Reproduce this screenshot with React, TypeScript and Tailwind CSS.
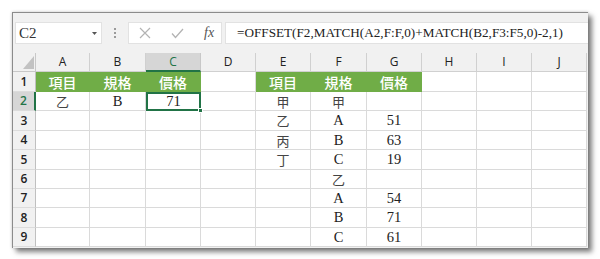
import React from "react";

const letters = ["A", "B", "C", "D", "E", "F", "G", "H", "I", "J"];
const rowH = [20, 19, 20, 19, 20, 19, 19, 20, 19];

type Cell = { t: string; green?: boolean };
const data: Record<number, Record<string, Cell>> = {
  1: {
    A: { t: "項目", green: true },
    B: { t: "規格", green: true },
    C: { t: "價格", green: true },
    E: { t: "項目", green: true },
    F: { t: "規格", green: true },
    G: { t: "價格", green: true },
  },
  2: { A: { t: "乙" }, B: { t: "B" }, C: { t: "71" }, E: { t: "甲" }, F: { t: "甲" } },
  3: { E: { t: "乙" }, F: { t: "A" }, G: { t: "51" } },
  4: { E: { t: "丙" }, F: { t: "B" }, G: { t: "63" } },
  5: { E: { t: "丁" }, F: { t: "C" }, G: { t: "19" } },
  6: { F: { t: "乙" } },
  7: { F: { t: "A" }, G: { t: "54" } },
  8: { F: { t: "B" }, G: { t: "71" } },
  9: { F: { t: "C" }, G: { t: "61" } },
};

const serif = "font-['Liberation_Serif','Noto_Sans_CJK_TC',serif]";
const sans = "font-['Open_Sans','Liberation_Sans',sans-serif]";

function CellText({ t }: { t: string }) {
  const cjk = /[\u4e00-\u9fff]/.test(t);
  if (cjk) {
    return (
      <span className="font-['Noto_Sans_CJK_TC',sans-serif] font-normal text-[13px] text-[#444] leading-none">
        {t}
      </span>
    );
  }
  return <span className={`${serif} text-[14.5px] text-[#222] leading-none`}>{t}</span>;
}

export default function App() {
  return (
    <div className="w-[600px] h-[259px] bg-white pt-[12px] pl-[12px]">
      <div className="w-[576px] h-[236px] bg-[#f1f1f1] border-l border-t border-[#8c8c8c] shadow-[4px_4px_5px_rgba(0,0,0,0.5),0_0_3px_rgba(0,0,0,0.2)] flex flex-col overflow-hidden">
        {/* formula bar */}
        <div className="flex items-start pt-[9px] h-[40px]">
          <div className="ml-[2px] w-[87px] h-[22px] bg-white border border-[#e2e2e2] flex items-center justify-between pl-[3px] pr-[4px]">
            <span className={`${serif} text-[15px] text-[#333] leading-none`}>C2</span>
            <svg width="5" height="3" viewBox="0 0 5 3">
              <polygon points="0,0 5,0 2.5,3" fill="#555" />
            </svg>
          </div>
          <div className="w-[26px] h-[22px] flex flex-col items-center justify-center gap-[2px]">
            <div className="w-[2px] h-[2px] bg-[#9a9a9a]" />
            <div className="w-[2px] h-[2px] bg-[#9a9a9a]" />
            <div className="w-[2px] h-[2px] bg-[#9a9a9a]" />
          </div>
          <div className="w-[94px] h-[22px] bg-white border border-[#e2e2e2] flex items-center pl-[10px]">
            <svg width="12" height="12" viewBox="0 0 12 12">
              <path d="M1 1 L11 11 M11 1 L1 11" stroke="#b3b3b3" strokeWidth="1.2" fill="none" />
            </svg>
            <svg width="13" height="11" viewBox="0 0 13 11" className="ml-[20px]">
              <path d="M1 5.5 L4.5 9.5 L12 1" stroke="#b3b3b3" strokeWidth="1.3" fill="none" />
            </svg>
            <span className={`ml-[20px] italic ${serif} text-[14px] text-[#555] leading-none`}>fx</span>
          </div>
          <div className="ml-[3px] flex-1 h-[22px] bg-white border border-[#e2e2e2] border-r-0 flex items-center pl-[11px]">
            <span className={`${serif} text-[13.2px] text-[#222] leading-none whitespace-nowrap`}>
              =OFFSET(F2,MATCH(A2,F:F,0)+MATCH(B2,F3:F5,0)-2,1)
            </span>
          </div>
        </div>

        {/* grid */}
        <div className="grid grid-cols-[23px_54px_56px_55px_55px_55px_56px_55px_55px_55px_55px] grid-rows-[19px_20px_19px_20px_19px_20px_19px_19px_20px_19px]">
          {/* corner */}
          <div className="border-r border-b border-[#c8c8c8] flex items-end justify-end pr-[1px] pb-[2px]">
            <svg width="11" height="13" viewBox="0 0 11 13">
              <polygon points="11,0 11,13 0,13" fill="#c2c2c2" />
            </svg>
          </div>
          {letters.map((l) => {
            const sel = l === "C";
            return (
              <div
                key={l}
                className={`${sans} text-[12px] font-medium flex items-center justify-center border-r ${
                  sel
                    ? "bg-[#d6d6d6] text-[#217346] border-b-2 border-b-[#217346] border-r-[#c8c8c8]"
                    : "text-[#222] border-b border-[#d0d0d0]"
                }`}
              >
                {l}
              </div>
            );
          })}
          {rowH.map((_, ri) => {
            const r = ri + 1;
            const selRow = r === 2;
            return (
              <React.Fragment key={r}>
                <div
                  className={`${sans} text-[12px] font-semibold flex items-center justify-center border-b border-b-[#dcdcdc] ${
                    selRow
                      ? "bg-[#d6d6d6] text-[#217346] border-r-2 border-r-[#217346]"
                      : "text-[#222] border-r border-r-[#c0c0c0]"
                  }`}
                >
                  {r}
                </div>
                {letters.map((l) => {
                  const c = data[r]?.[l];
                  const selected = r === 2 && l === "C";
                  if (c?.green) {
                    return (
                      <div
                        key={l}
                        className="bg-[#70ad47] border-r border-b border-[#70ad47] flex items-center justify-center text-white text-[14px] font-medium font-['Noto_Sans_CJK_TC',sans-serif] leading-none"
                      >
                        {c.t}
                      </div>
                    );
                  }
                  if (selected) {
                    return (
                      <div
                        key={l}
                        className="relative bg-white border-2 border-[#217346] flex items-center justify-center"
                      >
                        {c && <CellText t={c.t} />}
                        <div className="absolute right-[-4px] bottom-[-4px] w-[5px] h-[5px] bg-[#217346] border border-white" />
                      </div>
                    );
                  }
                  return (
                    <div
                      key={l}
                      className="bg-white border-r border-b border-[#dadada] flex items-center justify-center"
                    >
                      {c && <CellText t={c.t} />}
                    </div>
                  );
                })}
              </React.Fragment>
            );
          })}
        </div>
      </div>
    </div>
  );
}
